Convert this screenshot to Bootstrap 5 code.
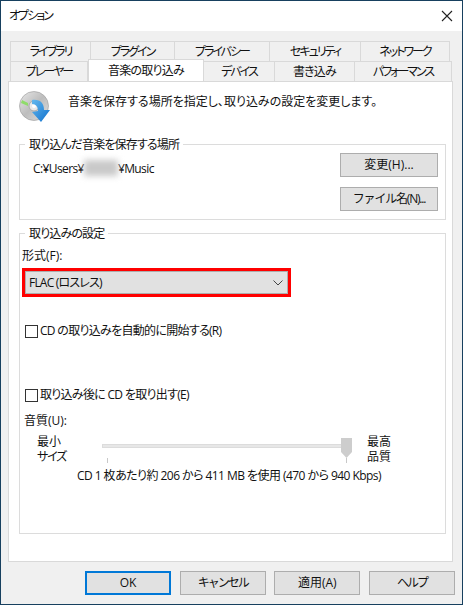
<!DOCTYPE html>
<html lang="ja">
<head>
<meta charset="utf-8">
<title>オプション</title>
<link href="https://cdn.jsdelivr.net/npm/bootstrap@5.3.0/dist/css/bootstrap.min.css" rel="stylesheet">
<style>
html,body{margin:0;padding:0;background:#f0f0f0}
body{font-family:"Open Sans","Noto Sans CJK JP",sans-serif;font-size:12px;line-height:16px;color:#111;font-feature-settings:"palt"}
.wnd{width:463px;height:605px;border:1px solid #17405f;background:#f0f0f0;display:flex;flex-direction:column;overflow:hidden}
.tbar{height:30px;background:#fff;flex:none;padding:0 9px 0 8px;font-size:12px}
.tabarea{flex:none;padding:10px 9px 0 7px;height:50px}
.trow{display:flex;height:20px;margin:0;padding:0;list-style:none}
.trow1{margin-left:2px;width:440px}
.tabx{background:#f0f0f0;border:1px solid #d9d9d9;border-left-width:0;display:flex;align-items:center;justify-content:center;white-space:nowrap;border-bottom-width:0;font-size:12px}
.tabx:first-child{border-left-width:1px}
.trow1 .tabx{height:20px}
.t1a{width:81px}.t1b{width:84px}.t1c{width:95px}.t1d{width:91px}.t1e{width:89px}
.trow2{margin-left:2px;width:442px}
.t2a{width:78px}.t2c{width:80px}.t2d{width:97px}
.t2m{width:116px;height:22px;margin-top:-2px;background:#fff;border:1px solid #d9d9d9;border-bottom:0;position:relative;z-index:2}
.t2a2{width:71px;border-left-width:0}
.kn{letter-spacing:-2px}
.mxd{letter-spacing:-.75px}
.panel{flex:none;height:481px;width:445px;margin-left:7px;background:#fff;border:1px solid #d9d9d9;padding:9px 6px 0 10px;position:relative}
.intro{height:53px;gap:17px}
.intro svg{flex:none;margin-top:0}
.intro span{margin-top:3px}
.grp{border:1px solid #dcdcdc;position:relative}
.grp1{height:76px;width:427px;display:flex;justify-content:space-between;padding:8px 7px 0 13px}
.grp2{height:301px;width:427px;margin-top:13px;padding:14px 0 0 2px}
.lgd{position:absolute;top:-8px;left:5px;background:#fff;padding:0 4px;white-space:nowrap;letter-spacing:-.85px}
.pth{margin-top:7px;white-space:nowrap;letter-spacing:-.6px}
.blr{display:inline-block;width:34px;height:16px;background:#c9c9c9;filter:blur(3px);vertical-align:-3px}
.wbtn{background:#e1e1e1;border:1px solid #adadad;border-radius:0;padding:0;font-size:12px;color:#111;line-height:16px;--bs-btn-hover-bg:#e1e1e1;width:98px;height:24px;display:block}
.fnb{letter-spacing:-1.2px}
.bcol{display:flex;flex-direction:column;gap:10px}
.cmb{width:269px;height:29px;margin-top:4px;border:3px solid #f00;background:#e1e1e1;display:flex;align-items:center;justify-content:space-between;padding:0 5px 0 4px;outline:1px solid #adadad;outline-offset:-4px}
.cmb span{letter-spacing:-.8px}
.ck{display:flex;align-items:center;gap:2px;margin-left:3px;height:16px;letter-spacing:-.7px}
.box{width:13px;height:13px;border:1px solid #333;background:#fff;flex:none}
.ck1{margin-top:26px}.ck2{margin-top:48px}
.qlb{margin:10px 0 0 2px}
.sldr{display:flex;margin:5px 0 0 15px;height:34px}
.mn{width:65px;flex:none}
.ln2{display:block;height:15px;line-height:15px}
.szw{letter-spacing:-1.2px}
.trk{width:250px;position:relative;flex:none}
.rail{position:absolute;left:0;top:10px;width:250px;height:4px;background:#e7e7e7;border:1px solid #dcdcdc}
.thumb{position:absolute;left:239px;top:4px}
.tick1,.tick2{position:absolute;top:24px;width:1px;height:5px;background:#c8c8c8}
.tick1{left:5px}.tick2{left:244px}
.mx{margin-left:15px}
.usage{margin:0 0 0 55px;white-space:nowrap;letter-spacing:-.55px}
.foot{flex:none;justify-content:space-between;padding:9px 7px 0 84px}
.foot .wbtn{width:86px;height:24px}
.foot .okb{border:2px solid #0078d7}
</style>
</head>
<body>
<div class="wnd">
  <div class="tbar d-flex align-items-center justify-content-between">
    <span class="kn">オプション</span>
    <svg width="12" height="12" viewBox="0 0 12 12"><path d="M1 1 11 11M11 1 1 11" stroke="#222" stroke-width="1.1" fill="none"/></svg>
  </div>
  <div class="tabarea">
    <ul class="trow trow1">
      <li class="tabx t1a kn">ライブラリ</li><li class="tabx t1b kn">プラグイン</li><li class="tabx t1c kn">プライバシー</li><li class="tabx t1d kn">セキュリティ</li><li class="tabx t1e kn">ネットワーク</li>
    </ul>
    <ul class="trow trow2">
      <li class="tabx t2a kn">プレーヤー</li><li class="tabx t2m mxd">音楽の取り込み</li><li class="tabx t2a2 kn">デバイス</li><li class="tabx t2c mxd">書き込み</li><li class="tabx t2d kn">パフォーマンス</li>
    </ul>
  </div>
  <div class="panel">
    <div class="intro d-flex">
      <svg width="32" height="32" viewBox="0 0 32 32">
        <defs>
          <linearGradient id="dsc" x1="0" y1="0" x2="1" y2="1"><stop offset="0" stop-color="#e8e8e8"/><stop offset=".5" stop-color="#bdbdbd"/><stop offset="1" stop-color="#dedede"/></linearGradient>
          <linearGradient id="arw" x1="0" y1="0" x2="1" y2="1"><stop offset="0" stop-color="#63b8ee"/><stop offset="1" stop-color="#1070cc"/></linearGradient>
        </defs>
        <circle cx="15" cy="15" r="14.5" fill="url(#dsc)" stroke="#999" stroke-width=".6"/>
        <path d="M2 12 9 15 9 12 3 9Z" fill="#8fdc6a"/>
        <circle cx="15" cy="15" r="5" fill="#e9e9e9" stroke="#aaa"/>
        <circle cx="15" cy="15" r="2" fill="#fff"/>
        <path d="M13 9C21 8 25 12 25 19L31 19 22 31 13 21 19 20C19 16 17 13 13 13Z" fill="url(#arw)"/>
      </svg>
      <span>音楽を保存する場所を指定し、取り込みの設定を変更します。</span>
    </div>
    <div class="grp grp1">
      <span class="lgd">取り込んだ音楽を保存する場所</span>
      <div class="pth">C:¥Users¥<span class="blr"></span>¥Music</div>
      <div class="bcol">
        <button type="button" class="btn wbtn">変更(H)...</button>
        <button type="button" class="btn wbtn fnb">ファイル名(N)...</button>
      </div>
    </div>
    <div class="grp grp2">
      <span class="lgd">取り込みの設定</span>
      <div>形式(F):</div>
      <div class="cmb">
        <span>FLAC (ロスレス)</span>
        <svg width="10" height="6" viewBox="0 0 10 6"><path d="M.5.5 5 5 9.500.5" stroke="#444" fill="none"/></svg>
      </div>
      <div class="ck ck1"><span class="box"></span><span>CD の取り込みを自動的に開始する(R)</span></div>
      <div class="ck ck2"><span class="box"></span><span>取り込み後に CD を取り出す(E)</span></div>
      <div class="qlb">音質(U):</div>
      <div class="sldr">
        <div class="mn"><span class="ln2">最小</span><span class="ln2 szw">サイズ</span></div>
        <div class="trk">
          <div class="rail"></div>
          <svg class="thumb" width="11" height="20" viewBox="0 0 11 20"><path d="M0 0H11V14L5.500 20 0 14Z" fill="#cdcdcd"/></svg>
          <span class="tick1"></span><span class="tick2"></span>
        </div>
        <div class="mx"><span class="ln2">最高</span><span class="ln2">品質</span></div>
      </div>
      <div class="usage">CD 1 枚あたり約 206 から 411 MB を使用 (470 から 940 Kbps)</div>
    </div>
  </div>
  <div class="foot d-flex">
    <button type="button" class="btn wbtn okb">OK</button>
    <button type="button" class="btn wbtn kn">キャンセル</button>
    <button type="button" class="btn wbtn">適用(A)</button>
    <button type="button" class="btn wbtn kn">ヘルプ</button>
  </div>
</div>
<script src="https://cdn.jsdelivr.net/npm/bootstrap@5.3.0/dist/js/bootstrap.bundle.min.js"></script>
</body>
</html>
